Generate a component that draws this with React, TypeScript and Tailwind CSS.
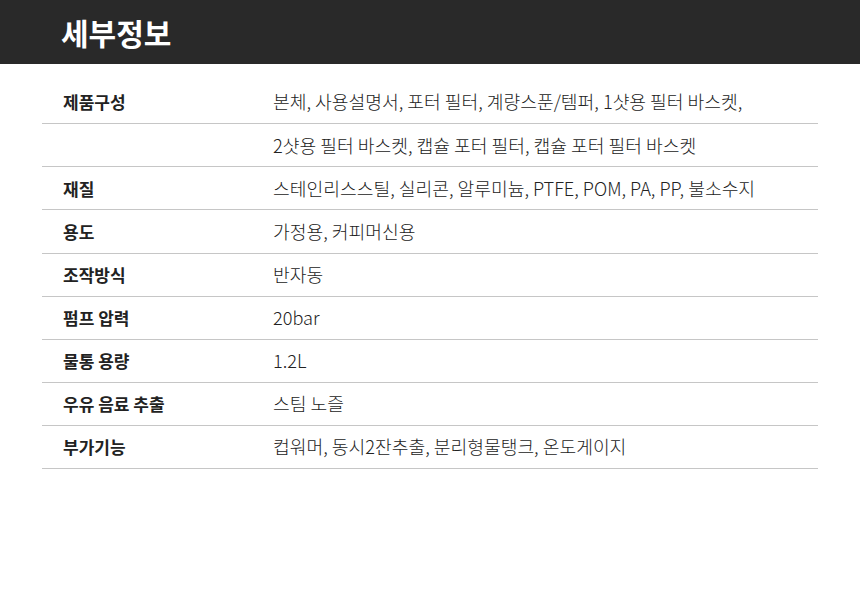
const rows: { label: string; value: string }[] = [
  { label: "제품구성", value: "본체, 사용설명서, 포터 필터, 계량스푼/템퍼, 1샷용 필터 바스켓," },
  { label: "", value: "2샷용 필터 바스켓, 캡슐 포터 필터, 캡슐 포터 필터 바스켓" },
  { label: "재질", value: "스테인리스스틸, 실리콘, 알루미늄, PTFE, POM, PA, PP, 불소수지" },
  { label: "용도", value: "가정용, 커피머신용" },
  { label: "조작방식", value: "반자동" },
  { label: "펌프 압력", value: "20bar" },
  { label: "물통 용량", value: "1.2L" },
  { label: "우유 음료 추출", value: "스팀 노즐" },
  { label: "부가기능", value: "컵워머, 동시2잔추출, 분리형물탱크, 온도게이지" },
]

export default function App() {
  return (
    <div
      className="w-[860px] h-[599px] bg-white"
      style={{ fontFamily: '"Noto Sans CJK KR", "Noto Sans", sans-serif' }}
    >
      <div className="h-16 bg-[#292929] flex items-center pl-[61px]">
        <h1 className="text-[30px] font-bold text-white">세부정보</h1>
      </div>

      <div className="mx-[42px] mt-[17px]">
        {rows.map((r, i) => (
          <div key={i} className="flex items-center h-[43.125px] border-b border-[#c6c6c6]">
            <div className="w-[231px] pl-[21px] text-[17px] font-bold text-[#222]">{r.label}</div>
            <div className="text-[18.2px] font-light text-[#222]">{r.value}</div>
          </div>
        ))}
      </div>
    </div>
  )
}
